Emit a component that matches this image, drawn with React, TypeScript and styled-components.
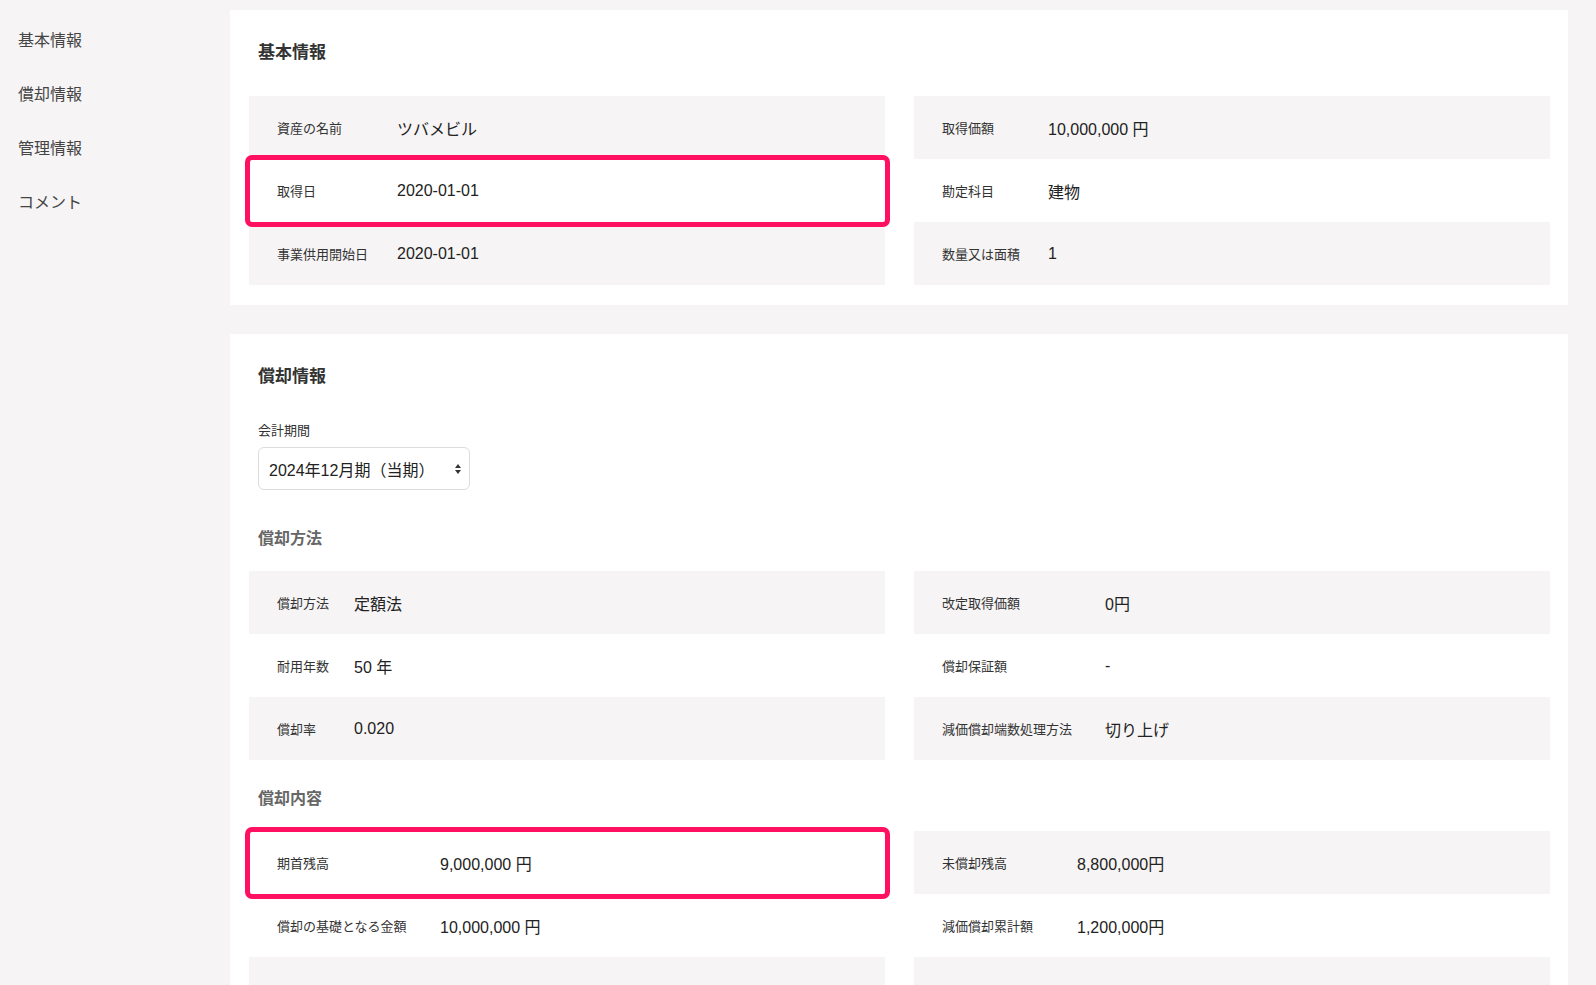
import React from 'react';
import styled, { createGlobalStyle } from 'styled-components';

const Global = createGlobalStyle`
  html, body { margin: 0; padding: 0; }
  body {
    background: #f6f4f5;
    font-family: "Liberation Sans", "Noto Sans CJK JP", sans-serif;
    color: #333;
    height: 985px;
    overflow: hidden;
  }
`;

const Page = styled.div`
  display: flex;
  padding: 10px 28px 0 0;
`;

const Side = styled.nav`
  width: 230px;
  flex-shrink: 0;
  display: flex;
  flex-direction: column;
  gap: 33px;
  padding: 20px 0 0 18px;
  box-sizing: border-box;
`;

const SideItem = styled.a`
  font-size: 16px;
  color: #444;
  line-height: 21px;
`;

const Main = styled.main`
  flex: 1;
  display: flex;
  flex-direction: column;
  gap: 29px;
`;

const Card = styled.section`
  background: #fff;
  padding: 32px 18px 20px 19px;
`;

const Title = styled.h2`
  margin: 0 0 32px 9px;
  font-size: 17px;
  font-weight: 700;
  color: #333;
  line-height: 22px;
`;

const Sub = styled.h3`
  margin: 0 0 21px 9px;
  font-size: 16px;
  font-weight: 700;
  color: #666;
  line-height: 22px;
`;

const Grid = styled.div`
  display: grid;
  grid-template-columns: 1fr 1fr;
  column-gap: 29px;
  margin-bottom: 28px;
  &:last-child { margin-bottom: 0; }
`;

const Col = styled.div`
  display: flex;
  flex-direction: column;
`;

const Row = styled.div<{ $shade: boolean; $lw: number; $hl?: boolean }>`
  display: grid;
  grid-template-columns: ${p => p.$lw}px 1fr;
  align-items: center;
  height: 63px;
  padding-left: 28px;
  background: ${p => (p.$hl ? '#fff' : p.$shade ? '#f6f4f5' : '#fff')};
  position: relative;
  ${p =>
    p.$hl &&
    `z-index: 1;
    &::after {
      content: '';
      position: absolute;
      inset: -4px -5px -5px -4px;
      border: 5px solid #ff1060;
      border-radius: 7px;
    }`}
`;

const Label = styled.span`
  font-size: 13px;
  color: #333;
`;

const Value = styled.span`
  font-size: 16px;
  color: #222;
`;

const Field = styled.div`
  margin: 0 0 38px 9px;
  display: flex;
  flex-direction: column;
  gap: 8px;
`;

const FieldLabel = styled.label`
  font-size: 13px;
  color: #333;
`;

const Select = styled.div`
  width: 212px;
  height: 43px;
  box-sizing: border-box;
  border: 1px solid #dcdcdc;
  border-radius: 6px;
  display: flex;
  align-items: center;
  justify-content: space-between;
  padding: 0 8px 0 10px;
  font-size: 16px;
  color: #222;
`;

type Item = [string, string, boolean?];

const Table = ({ left, right, lw, rw }: { left: Item[]; right: Item[]; lw: number; rw: number }) => (
  <Grid>
    <Col>
      {left.map(([l, v, hl], i) => (
        <Row key={i} $shade={i % 2 === 0} $lw={lw} $hl={hl}>
          <Label>{l}</Label>
          <Value>{v}</Value>
        </Row>
      ))}
    </Col>
    <Col>
      {right.map(([l, v], i) => (
        <Row key={i} $shade={i % 2 === 0} $lw={rw}>
          <Label>{l}</Label>
          <Value>{v}</Value>
        </Row>
      ))}
    </Col>
  </Grid>
);

export default function App() {
  return (
    <>
      <Global />
      <Page>
        <Side>
          <SideItem>基本情報</SideItem>
          <SideItem>償却情報</SideItem>
          <SideItem>管理情報</SideItem>
          <SideItem>コメント</SideItem>
        </Side>
        <Main>
          <Card>
            <Title>基本情報</Title>
            <Table
              lw={120}
              rw={106}
              left={[
                ['資産の名前', 'ツバメビル'],
                ['取得日', '2020-01-01', true],
                ['事業供用開始日', '2020-01-01'],
              ]}
              right={[
                ['取得価額', '10,000,000 円'],
                ['勘定科目', '建物'],
                ['数量又は面積', '1'],
              ]}
            />
          </Card>
          <Card>
            <Title>償却情報</Title>
            <Field>
              <FieldLabel>会計期間</FieldLabel>
              <Select>
                <span>2024年12月期（当期）</span>
                <svg width="6" height="10" viewBox="0 0 6 10">
                  <path d="M0 4 L3 0 L6 4Z M0 6 L3 10 L6 6Z" fill="#333" />
                </svg>
              </Select>
            </Field>
            <Sub>償却方法</Sub>
            <Table
              lw={77}
              rw={163}
              left={[
                ['償却方法', '定額法'],
                ['耐用年数', '50 年'],
                ['償却率', '0.020'],
              ]}
              right={[
                ['改定取得価額', '0円'],
                ['償却保証額', '-'],
                ['減価償却端数処理方法', '切り上げ'],
              ]}
            />
            <Sub>償却内容</Sub>
            <Table
              lw={163}
              rw={135}
              left={[
                ['期首残高', '9,000,000 円', true],
                ['償却の基礎となる金額', '10,000,000 円'],
                ['', ''],
              ]}
              right={[
                ['未償却残高', '8,800,000円'],
                ['減価償却累計額', '1,200,000円'],
                ['', ''],
              ]}
            />
          </Card>
        </Main>
      </Page>
    </>
  );
}
